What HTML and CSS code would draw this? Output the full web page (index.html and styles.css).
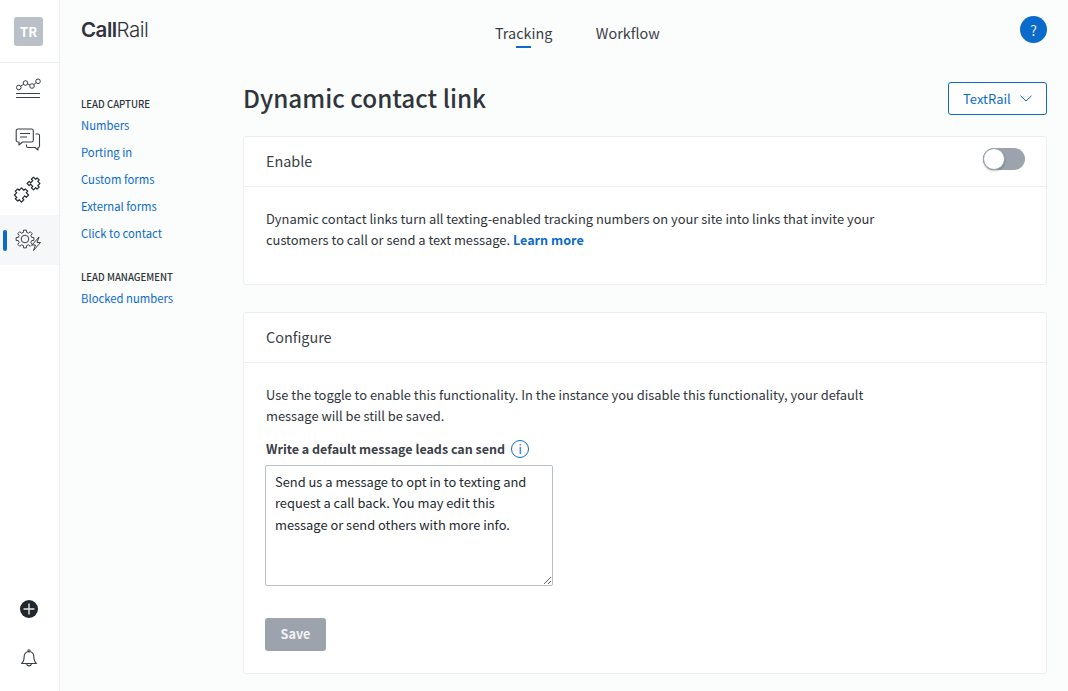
FILE: index.html
```html
<!DOCTYPE html>
<html lang="en">
<head>
<meta charset="utf-8">
<title>Dynamic contact link</title>
<link rel="stylesheet" href="styles.css">
</head>
<body>
<div class="app">
  <nav class="rail">
    <div class="rail-top"><span class="avatar">TR</span></div>
    <a class="rail-item">
      <svg width="26" height="24" viewBox="0 0 26 24" fill="none" stroke="#3a4047" stroke-width="1"><circle cx="3.800" cy="9.500" r="2.300"/><circle cx="10.500" cy="5" r="2.300"/><circle cx="17" cy="8" r="2.300"/><circle cx="23" cy="3.300" r="2.300"/><path d="M5.700 8.200l3-2M12.600 6l2.300 1M18.800 6.600l2.400-2M1 15.500h24M1 19.500h24"/></svg>
    </a>
    <a class="rail-item">
      <svg width="26" height="24" viewBox="0 0 26 24" fill="none" stroke="#3a4047" stroke-width="1.100" stroke-linejoin="round"><path d="M3 1h13.500a1.800 1.800 0 0 1 1.800 1.800v9.400a1.800 1.800 0 0 1-1.800 1.800H7.500L4 17v-3H3a1.800 1.800 0 0 1-1.800-1.800V2.800A1.800 1.800 0 0 1 3 1z"/><path d="M5 5.500h10M5 9h7"/><path d="M20.500 6H23a1.500 1.500 0 0 1 1.500 1.500V18a1.500 1.500 0 0 1-1.500 1.500V22l-3-2.500h-7a1.500 1.500 0 0 1-1.500-1.500v-1.500"/></svg>
    </a>
    <a class="rail-item">
      <svg width="32" height="30" viewBox="0 0 32 30" fill="none" stroke="#24292e" stroke-width="1.200" stroke-linejoin="round">
        <path transform="translate(21.500 8.500) rotate(45)" d="M-4.500-4.500h3v-2h3v2h3v3h2v3h-2v3h-3v-2h-3v2h-3v-3h2v-3h-2z"/>
        <path transform="translate(9.500 20) rotate(45)" d="M-5-5h3.300v-2h3.400v2H5v3.300H3v3.400h2V5H1.700v2h-3.400V5H-5V1.700h-2v-3.400h2z"/>
      </svg>
    </a>
    <a class="rail-item active">
      <span class="marker"></span>
      <svg width="26" height="22" viewBox="0 0 26 22" fill="none" stroke="#3a4047" stroke-width="1" stroke-linejoin="round">
        <g transform="translate(10 10)">
          <path d="M6.600-1.650L8.890-1.410 8.890 1.410 6.600 1.650 5.830 3.500 7.280 5.290 5.290 7.280 3.500 5.830 1.650 6.600 1.410 8.890-1.410 8.890-1.650 6.600-3.500 5.830-5.290 7.280-7.280 5.290-5.830 3.500-6.600 1.650-8.890 1.410-8.890-1.410-6.600-1.650-5.830-3.500-7.280-5.290-5.290-7.280-3.500-5.830-1.650-6.600-1.410-8.890 1.410-8.890 1.650-6.600 3.500-5.830 5.290-7.280 7.280-5.290 5.830-3.500z"/>
          <circle r="3.800"/>
        </g>
        <path class="bolt" d="M24 8l-7 8h3.500l-2 5.500 7-8h-3.500l2-5.500z"/>
      </svg>
    </a>
    <div class="rail-bottom">
      <span class="plus"><svg width="18" height="18" viewBox="0 0 18 18" stroke="#e6e8ea" stroke-width="1.400"><path d="M9 3.500v11M3.500 9h11"/></svg></span>
      <svg class="bell" width="16" height="19" viewBox="0 0 16 19" fill="none" stroke="#3a4047" stroke-width="1.100" stroke-linejoin="round"><path d="M8 2.500a4.800 4.800 0 0 1 4.800 4.800c0 3.700.8 5.700 2.600 7.200H.6c1.800-1.500 2.600-3.500 2.600-7.200A4.800 4.800 0 0 1 8 2.500z"/><circle cx="8" cy="1.800" r="1.100"/><path d="M5.800 14.700a2.200 2.200 0 0 0 4.400 0"/></svg>
    </div>
  </nav>

  <div class="main">
    <header class="topbar">
      <div class="logo"><b>Call</b>Rail</div>
      <div class="tabs">
        <a class="tab current">Tracking</a>
        <a class="tab">Workflow</a>
      </div>
      <span class="help">?</span>
    </header>

    <div class="body">
      <aside class="side">
        <h4>LEAD CAPTURE</h4>
        <a>Numbers</a>
        <a>Porting in</a>
        <a>Custom forms</a>
        <a>External forms</a>
        <a>Click to contact</a>
        <h4 class="second">LEAD MANAGEMENT</h4>
        <a>Blocked numbers</a>
      </aside>

      <main class="content">
        <div class="title-row">
          <h1>Dynamic contact link</h1>
          <button class="select">TextRail
            <svg width="12" height="7" viewBox="0 0 12 7" fill="none" stroke="#0b6bcb" stroke-width="1"><path d="M.5.800L6 6l5.500-5.200"/></svg>
          </button>
        </div>

        <section class="card first">
          <div class="card-head">Enable <span class="toggle"><span class="knob"></span></span></div>
          <div class="card-body">
            <p>Dynamic contact links turn all texting-enabled tracking numbers on your site into links that invite your customers to call or send a text message. <a class="more">Learn more</a></p>
          </div>
        </section>

        <section class="card">
          <div class="card-head">Configure</div>
          <div class="card-body">
            <p>Use the toggle to enable this functionality. In the instance you disable this functionality, your default message will be still be saved.</p>
            <div class="label">Write a default message leads can send <span class="info">i</span></div>
            <textarea class="message">Send us a message to opt in to texting and request a call back. You may edit this message or send others with more info.</textarea>
            <button class="save">Save</button>
          </div>
        </section>
      </main>
    </div>
  </div>
</div>
</body>
</html>
```

FILE: styles.css
```css
* { box-sizing: border-box; }
html, body { margin: 0; height: 100%; overflow: hidden; }
body {
  font-family: "Noto Sans CJK SC", "Noto Sans", sans-serif;
  font-size: 13px;
  color: #2f353b;
  background: #fbfcfc;
}
a { color: #0b6bcb; text-decoration: none; }

.app { display: flex; height: 691px; }

.rail {
  width: 60px;
  flex: none;
  background: #fff;
  border-right: 1px solid #eceef2;
  display: flex;
  flex-direction: column;
}
.rail-top {
  height: 63px;
  padding: 17px 2px 0 0;
  border-bottom: 1px solid #eceef2;
  display: flex;
  justify-content: center;
  align-items: flex-start;
}
.avatar {
  width: 29px;
  height: 29px;
  border-radius: 3px;
  background: #b9c0c7;
  color: #fff;
  font-size: 13px;
  font-weight: 700;
  display: flex;
  align-items: center;
  justify-content: center;
}
.rail-item {
  height: 50px;
  padding-right: 3px;
  display: flex;
  align-items: center;
  justify-content: center;
  position: relative;
}
.rail-top + .rail-item { margin-top: 2px; }
.rail-item.active { background: #f6f7f9; }
.marker {
  position: absolute;
  left: 3px;
  top: 15px;
  width: 4px;
  height: 21px;
  border-radius: 2px;
  background: #0b6bcb;
}
.bolt { fill: #f6f7f9; }
.rail-bottom {
  margin-top: auto;
  padding: 0 1px 23px 0;
  display: flex;
  flex-direction: column;
  align-items: center;
  gap: 31px;
}
.plus {
  width: 18px;
  height: 18px;
  border-radius: 50%;
  background: #22272c;
  display: flex;
}
.bell { display: block; }

.main { flex: 1; min-width: 0; display: flex; flex-direction: column; }

.topbar {
  height: 63px;
  flex: none;
  padding: 0 21px;
  display: flex;
  align-items: flex-start;
  position: relative;
}
.logo {
  margin-top: 16px;
  font-family: "Inter", sans-serif;
  font-size: 20.500px;
  line-height: 28px;
  font-weight: 300;
  letter-spacing: -0.5px;
  color: #2f353b;
  width: 414px;
}
.logo b { font-weight: 600; }
.tabs { display: flex; gap: 43.500px; margin-top: 21px; }
.tab {
  font-size: 14.400px;
  line-height: 24px;
  color: #3a4047;
  position: relative;
}
.tab.current::after {
  content: "";
  position: absolute;
  left: 21px;
  right: 21px;
  bottom: -3px;
  height: 2px;
  background: #0b6bcb;
}
.help {
  position: absolute;
  right: 21px;
  top: 16px;
  width: 27px;
  height: 27px;
  border-radius: 50%;
  background: #0b6bcb;
  color: #dfeaf6;
  font-size: 14px;
  display: flex;
  align-items: center;
  justify-content: center;
}

.body { flex: 1; display: flex; min-height: 0; }
.side { width: 183px; flex: none; padding: 35px 0 0 21px; }
.side h4 {
  margin: 0 0 1px;
  font-size: 9.600px;
  line-height: 13px;
  font-weight: 500;
  color: #2f353b;
}
.side h4.second { margin-top: 24px; }
.side a { display: block; font-size: 11.300px; line-height: 27px; height: 27px; }

.content { width: 804px; flex: none; }
.title-row {
  height: 73px;
  display: flex;
  justify-content: space-between;
  align-items: flex-start;
  padding-top: 19px;
}
h1 {
  margin: -1px 0 0;
  font-size: 24.300px;
  line-height: 34px;
  font-weight: 500;
  color: #2f353b;
}
.select {
  width: 99px;
  height: 33px;
  border: 1px solid #0b6bcb;
  border-radius: 3px;
  background: #fff;
  color: #0b6bcb;
  font: inherit;
  font-size: 13px;
  display: flex;
  align-items: center;
  justify-content: space-between;
  padding: 0 14px;
}
.card {
  background: #fff;
  border: 1px solid #eceef2;
  border-radius: 3px;
  height: 362px;
}
.card.first { height: 149px; margin-bottom: 27px; }
.card-head {
  height: 50px;
  padding: 0 21px 3px 22px;
  border-bottom: 1px solid #eceef2;
  font-size: 14.400px;
  color: #3a4047;
  display: flex;
  align-items: center;
  justify-content: space-between;
}
.toggle {
  width: 42px;
  height: 22px;
  margin-bottom: 2px;
  border-radius: 11px;
  background: #9ca3ad;
  position: relative;
}
.knob {
  position: absolute;
  left: 0;
  top: 0;
  width: 22px;
  height: 22px;
  border-radius: 50%;
  background: #fff;
  border: 1px solid #9ca3ad;
  box-shadow: 0 1px 2px rgba(0,0,0,.25);
}
.card-body { padding: 21px 21px 0 22px; }
.card-body p { margin: 0; max-width: 620px; font-size: 12.880px; line-height: 21px; }
.more { font-weight: 700; font-size: 12.600px; }
.label {
  margin: 13px 0 0 0;
  font-size: 12.500px;
  line-height: 20px;
  font-weight: 700;
  color: #3a4047;
  display: flex;
  align-items: center;
  gap: 6px;
}
.info {
  width: 18px;
  height: 18px;
  border: 1px solid #0b6bcb;
  border-radius: 50%;
  color: #0b6bcb;
  font-size: 12px;
  font-weight: 400;
  display: flex;
  align-items: center;
  justify-content: center;
}
.message {
  display: block;
  margin: 6px 0 0 -1px;
  width: 288px;
  height: 121px;
  padding: 5px 9px;
  border: 1px solid #b9c0c7;
  border-radius: 2px;
  font: inherit;
  font-size: 12.880px;
  line-height: 21.300px;
  color: #24292e;
  background: #fff;
  resize: vertical;
  outline: none;
}
.save {
  display: block;
  margin: 32px 0 0 -1px;
  width: 61px;
  height: 33px;
  padding: 0 0 2px;
  border: 0;
  border-radius: 3px;
  background: #9ca3ad;
  color: #f1f2f4;
  font: inherit;
  font-size: 12.700px;
  font-weight: 700;
}
```
